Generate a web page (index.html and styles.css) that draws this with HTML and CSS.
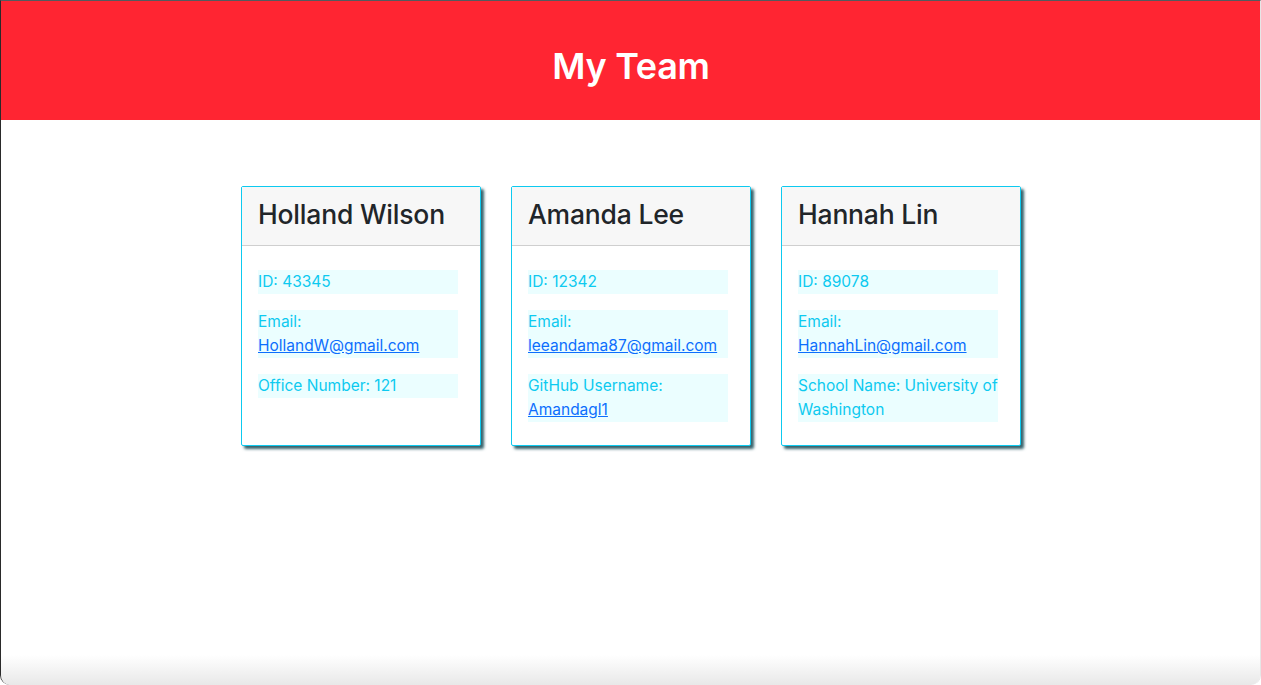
FILE: index.html
```html
<!DOCTYPE html>
<html lang="en">
<head>
<meta charset="utf-8">
<title>My Team</title>
<link rel="stylesheet" href="styles.css">
</head>
<body>
<div class="window">
  <header class="banner">
    <h1 class="banner-title">My Team</h1>
  </header>
  <main class="team">
    <div class="card">
      <div class="card-header"><h2 class="card-name">Holland Wilson</h2></div>
      <ul class="card-body">
        <li class="info">ID: 43345</li>
        <li class="info">Email: <a class="link" href="#">HollandW@gmail.com</a></li>
        <li class="info">Office Number: 121</li>
      </ul>
    </div>
    <div class="card">
      <div class="card-header"><h2 class="card-name">Amanda Lee</h2></div>
      <ul class="card-body">
        <li class="info">ID: 12342</li>
        <li class="info">Email: <a class="link" href="#">leeandama87@gmail.com</a></li>
        <li class="info">GitHub Username: <a class="link" href="#">Amandagl1</a></li>
      </ul>
    </div>
    <div class="card">
      <div class="card-header"><h2 class="card-name">Hannah Lin</h2></div>
      <ul class="card-body">
        <li class="info">ID: 89078</li>
        <li class="info">Email: <a class="link" href="#">HannahLin@gmail.com</a></li>
        <li class="info">School Name: University of Washington</li>
      </ul>
    </div>
  </main>
  <div class="bottom-shade"></div>
</div>
</body>
</html>
```

FILE: styles.css
```css
html, body {
  margin: 0;
  padding: 0;
  height: 100%;
  background: #ffffff;
}
body {
  font-family: Inter, "Noto Sans", "Liberation Sans", sans-serif;
  color: #212529;
}
.window {
  height: 685px;
  border-top: 1px solid #555a5e;
  border-left: 1px solid #2a2a2a;
  border-right: 1px solid #e6e6e6;
  border-radius: 0 0 10px 10px;
  box-sizing: border-box;
  position: relative;
  overflow: hidden;
}
.banner {
  height: 119px;
  background: #ff2532;
  display: flex;
  align-items: center;
  justify-content: center;
}
.banner-title {
  margin: 0;
  color: #ffffff;
  font-size: 36px;
  font-weight: 600;
  letter-spacing: -0.3px;
  padding-top: 10px;
  padding-left: 1px;
}
.team {
  display: flex;
  justify-content: center;
  align-items: stretch;
  gap: 30px;
  padding-top: 66px;
  padding-left: 1px;
}
.card {
  width: 240px;
  box-sizing: border-box;
  border: 1px solid #0dcaf0;
  border-radius: 2px;
  box-shadow: 3px 3px 3px #36626b;
  background: #ffffff;
  display: flex;
  flex-direction: column;
}
.card-header {
  background: #f7f7f7;
  border-bottom: 1px solid #cfcfcf;
  height: 59px;
  box-sizing: border-box;
  padding: 0 16px 5px;
  display: flex;
  align-items: center;
}
.card-name {
  margin: 0;
  font-size: 26.5px;
  font-weight: 500;
  color: #212529;
  letter-spacing: -0.2px;
}
.card-body {
  list-style: none;
  margin: 0;
  padding: 24px 16px 23px;
  display: flex;
  flex-direction: column;
  gap: 16px;
}
.info {
  width: 200px;
  background: #ebfeff;
  color: #0dcaf0;
  font-size: 15.5px;
  line-height: 24px;
}
.link {
  color: #0d6efd;
  text-decoration: underline;
}
.bottom-shade {
  position: absolute;
  left: 0;
  right: 0;
  bottom: 0;
  height: 30px;
  background: linear-gradient(to bottom, rgba(235,235,235,0), rgba(232,232,232,1));
  pointer-events: none;
}
```
